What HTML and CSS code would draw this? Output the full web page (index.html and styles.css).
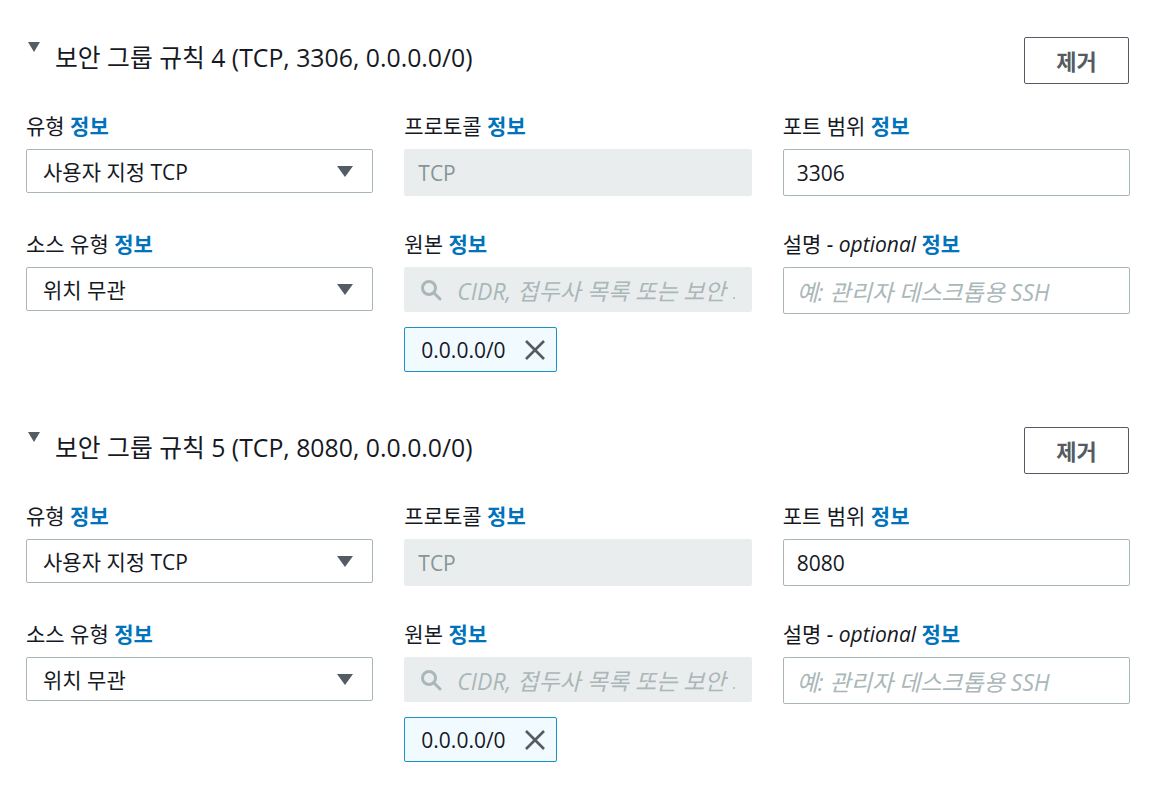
FILE: index.html
```html
<!DOCTYPE html>
<html lang="ko">
<head>
<meta charset="utf-8">
<link rel="stylesheet" href="styles.css">
</head>
<body>
<div class="page">
  <section class="rule">
    <div class="rule-head">
      <h2 class="rule-title"><span class="caret"></span><span>보안 그룹 규칙 4 (TCP, 3306, 0.0.0.0/0)</span></h2>
      <button class="btn">제거</button>
    </div>
    <div class="grid">
      <div class="field">
        <div class="label">유형 <a class="info">정보</a></div>
        <div class="select"><span>사용자 지정 TCP</span><span class="arrow"></span></div>
      </div>
      <div class="field">
        <div class="label">프로토콜 <a class="info">정보</a></div>
        <div class="input disabled">TCP</div>
      </div>
      <div class="field">
        <div class="label">포트 범위 <a class="info">정보</a></div>
        <div class="input">3306</div>
      </div>
      <div class="field">
        <div class="label">소스 유형 <a class="info">정보</a></div>
        <div class="select"><span>위치 무관</span><span class="arrow"></span></div>
      </div>
      <div class="field">
        <div class="label">원본 <a class="info">정보</a></div>
        <div class="input disabled search">
          <svg class="search-icon" width="22" height="22" viewBox="0 0 22 22"><circle cx="9" cy="9" r="6.5" fill="none" stroke="#aab7b8" stroke-width="3"/><line x1="13.8" y1="13.8" x2="20" y2="20" stroke="#aab7b8" stroke-width="3" stroke-linecap="round"/></svg>
          <span class="ph">CIDR, 접두사 목록 또는 보안 그룹</span>
        </div>
        <div class="token"><span>0.0.0.0/0</span>
          <svg width="22" height="22" viewBox="0 0 22 22"><path d="M2 2 L20 20 M20 2 L2 20" stroke="#545b64" stroke-width="2.6" fill="none"/></svg>
        </div>
      </div>
      <div class="field">
        <div class="label">설명 <i>- optional</i> <a class="info">정보</a></div>
        <div class="input"><span class="ph">예: 관리자 데스크톱용 SSH</span></div>
      </div>
    </div>
  </section>

  <section class="rule">
    <div class="rule-head">
      <h2 class="rule-title"><span class="caret"></span><span>보안 그룹 규칙 5 (TCP, 8080, 0.0.0.0/0)</span></h2>
      <button class="btn">제거</button>
    </div>
    <div class="grid">
      <div class="field">
        <div class="label">유형 <a class="info">정보</a></div>
        <div class="select"><span>사용자 지정 TCP</span><span class="arrow"></span></div>
      </div>
      <div class="field">
        <div class="label">프로토콜 <a class="info">정보</a></div>
        <div class="input disabled">TCP</div>
      </div>
      <div class="field">
        <div class="label">포트 범위 <a class="info">정보</a></div>
        <div class="input">8080</div>
      </div>
      <div class="field">
        <div class="label">소스 유형 <a class="info">정보</a></div>
        <div class="select"><span>위치 무관</span><span class="arrow"></span></div>
      </div>
      <div class="field">
        <div class="label">원본 <a class="info">정보</a></div>
        <div class="input disabled search">
          <svg class="search-icon" width="22" height="22" viewBox="0 0 22 22"><circle cx="9" cy="9" r="6.5" fill="none" stroke="#aab7b8" stroke-width="3"/><line x1="13.8" y1="13.8" x2="20" y2="20" stroke="#aab7b8" stroke-width="3" stroke-linecap="round"/></svg>
          <span class="ph">CIDR, 접두사 목록 또는 보안 그룹</span>
        </div>
        <div class="token"><span>0.0.0.0/0</span>
          <svg width="22" height="22" viewBox="0 0 22 22"><path d="M2 2 L20 20 M20 2 L2 20" stroke="#545b64" stroke-width="2.6" fill="none"/></svg>
        </div>
      </div>
      <div class="field">
        <div class="label">설명 <i>- optional</i> <a class="info">정보</a></div>
        <div class="input"><span class="ph">예: 관리자 데스크톱용 SSH</span></div>
      </div>
    </div>
  </section>
</div>
</body>
</html>
```

FILE: styles.css
```css
html, body {
  margin: 0;
  padding: 0;
  background: #ffffff;
}
body {
  font-family: "Open Sans", "Noto Sans CJK KR", sans-serif;
  color: #16191f;
  font-size: 21px;
}
.page {
  padding: 37px 25px 0 26px;
}
.rule {
  height: 390px;
}
.rule-head {
  display: flex;
  justify-content: space-between;
  align-items: flex-start;
  height: 47px;
}
.rule-title {
  margin: 0;
  display: flex;
  align-items: flex-start;
  font-size: 24.8px;
  font-weight: 400;
  line-height: 34px;
  padding-top: 3px;
  padding-left: 2px;
  color: #16191f;
}
.caret {
  width: 0;
  height: 0;
  border-left: 6px solid transparent;
  border-right: 6px solid transparent;
  border-top: 10px solid #545b64;
  margin-right: 15px;
  margin-top: 2px;
}
.btn {
  width: 105px;
  height: 47px;
  background: #fff;
  border: 1px solid #545b64;
  border-radius: 2px;
  font-family: "Open Sans", "Noto Sans CJK KR", sans-serif;
  font-size: 22px;
  font-weight: 700;
  color: #545b64;
  padding: 0 0 2px;
  margin-right: 1px;
}
.grid {
  display: grid;
  grid-template-columns: repeat(3, minmax(0, 1fr));
  column-gap: 31px;
  row-gap: 35px;
  margin-top: 29px;
}
.field {
  min-width: 0;
}
.label {
  line-height: 26px;
  margin-bottom: 10px;
  white-space: nowrap;
}
.label i {
  font-style: italic;
}
.info {
  color: #0073bb;
  font-weight: 700;
}
.select {
  box-sizing: border-box;
  height: 44px;
  border: 1px solid #aab7b8;
  border-radius: 2px;
  display: flex;
  align-items: center;
  justify-content: space-between;
  padding: 0 19px 0 16px;
}
.arrow {
  width: 0;
  height: 0;
  border-left: 8px solid transparent;
  border-right: 8px solid transparent;
  border-top: 11px solid #545b64;
}
.input {
  box-sizing: border-box;
  height: 47px;
  border: 1px solid #aab7b8;
  border-radius: 2px;
  display: flex;
  align-items: center;
  padding: 0 13px;
  white-space: nowrap;
  overflow: hidden;
}
.input.disabled {
  background: #eaeded;
  border-color: #eaeded;
  color: #879596;
}
.input.search {
  height: 45px;
  padding: 0 16px 0 15px;
}
.search-icon {
  flex: none;
  margin-right: 15px;
}
.ph {
  color: #aab7b8;
  font-style: italic;
  font-size: 23px;
  overflow: hidden;
  white-space: nowrap;
}
.token {
  box-sizing: border-box;
  margin-top: 15px;
  width: 153px;
  height: 45px;
  background: #f1faff;
  border: 1px solid #1a93c4;
  border-radius: 2px;
  display: flex;
  align-items: center;
  padding: 0 10px 0 16px;
  justify-content: space-between;
}
```
